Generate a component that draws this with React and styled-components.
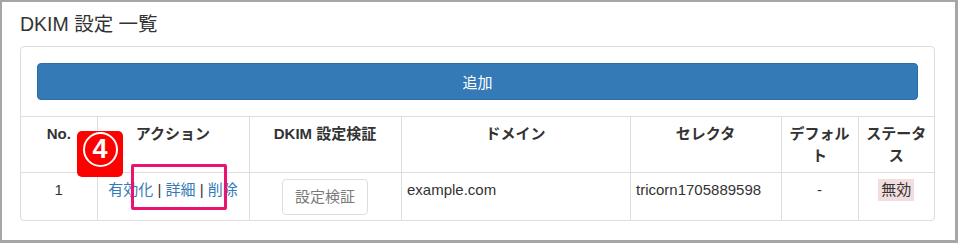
import React from "react";
import styled, { createGlobalStyle } from "styled-components";

const GlobalStyle = createGlobalStyle`
  body {
    margin: 0;
    background: #fff;
    font-family: "Liberation Sans", "Noto Sans CJK JP", sans-serif;
    color: #333;
  }
`;

const columns = [76, 152, 152, 229, 151, 77, 76];

const rows = [
  {
    no: "1",
    domain: "example.com",
    selector: "tricorn1705889598",
    isDefault: "-",
    status: "無効",
  },
];

const App = () => {
  return (
    <>
      <GlobalStyle />
      <Frame>
        <Title>DKIM 設定 一覧</Title>
        <Panel>
          <PanelBody>
            <PrimaryButton type="button">追加</PrimaryButton>
          </PanelBody>
          <Table>
            <colgroup>
              {columns.map((w, i) => (
                <col key={i} style={{ width: w }} />
              ))}
            </colgroup>
            <thead>
              <tr>
                <Th>No.</Th>
                <Th>アクション</Th>
                <Th>DKIM 設定検証</Th>
                <Th>ドメイン</Th>
                <Th>セレクタ</Th>
                <Th>デフォルト</Th>
                <Th>ステータス</Th>
              </tr>
            </thead>
            <tbody>
              {rows.map((row) => (
                <tr key={row.no}>
                  <Td $align="center">{row.no}</Td>
                  <Td $align="center">
                    <Link href="#">有効化</Link> | <Link href="#">詳細</Link> |{" "}
                    <Link href="#">削除</Link>
                  </Td>
                  <Td $align="center">
                    <VerifyButton type="button" disabled>
                      設定検証
                    </VerifyButton>
                  </Td>
                  <Td>{row.domain}</Td>
                  <Td>{row.selector}</Td>
                  <Td $align="center">{row.isDefault}</Td>
                  <Td $align="center">
                    <StatusLabel>{row.status}</StatusLabel>
                  </Td>
                </tr>
              ))}
            </tbody>
          </Table>
        </Panel>

        <StepBadge>
          <StepCircle>4</StepCircle>
        </StepBadge>
        <Highlight />
      </Frame>
    </>
  );
};

export default App;

const Frame = styled.div`
  position: relative;
  box-sizing: border-box;
  width: 958px;
  height: 243px;
  border-style: solid;
  border-color: #a6a6a6;
  border-width: 2px 3px 3px 2px;
  padding: 0 20px 0 18px;
  background: #fff;
  overflow: hidden;
`;

const Title = styled.h4`
  margin: 10px 0 10px;
  font-size: 19.5px;
  line-height: 24px;
  font-weight: normal;
  color: #333;
`;

const Panel = styled.div`
  border: 1px solid #ddd;
  border-radius: 4px;
  background: #fff;
  overflow: hidden;
`;

const PanelBody = styled.div`
  padding: 16px;
`;

const PrimaryButton = styled.button`
  display: block;
  box-sizing: border-box;
  width: 100%;
  height: 37px;
  padding: 0;
  border: 1px solid #2e6da4;
  border-radius: 4px;
  background: #337ab7;
  color: #fff;
  font-family: inherit;
  font-size: 15px;
  cursor: pointer;
`;

const Table = styled.table`
  width: 100%;
  table-layout: fixed;
  border-collapse: collapse;
  font-size: 15px;
  line-height: 22px;

  tr > *:first-child {
    border-left: 0;
  }
  tr > *:last-child {
    border-right: 0;
  }
  tbody tr:last-child td {
    border-bottom: 0;
  }
`;

const Th = styled.th`
  padding: 5.5px;
  border: 1px solid #ddd;
  text-align: center;
  vertical-align: top;
  font-weight: bold;
  color: #333;
`;

const Td = styled.td`
  padding: 5.5px;
  border: 1px solid #ddd;
  text-align: ${(p) => p.$align || "left"};
  vertical-align: top;
  color: #333;
  white-space: nowrap;
`;

const Link = styled.a`
  color: #337ab7;
  text-decoration: none;
`;

const VerifyButton = styled.button`
  box-sizing: border-box;
  height: 36px;
  padding: 6px 12px;
  border: 1px solid #ccc;
  border-radius: 4px;
  background: #fff;
  color: #333;
  opacity: 0.65;
  font-family: inherit;
  font-size: 15px;
  line-height: 22px;
`;

const StatusLabel = styled.span`
  display: inline-block;
  padding: 0 3px;
  background: #f2dede;
  color: #333;
`;

const StepBadge = styled.div`
  position: absolute;
  left: 75px;
  top: 129px;
  width: 46px;
  height: 46px;
  box-sizing: border-box;
  padding-top: 1px;
  border-radius: 5px;
  background: #ff0000;
  display: flex;
  flex-direction: column;
  align-items: center;
`;

const StepCircle = styled.div`
  box-sizing: border-box;
  width: 35px;
  height: 35px;
  border: 2.5px solid #fff;
  border-radius: 50%;
  display: flex;
  align-items: center;
  justify-content: center;
  color: #fff;
  font-family: "Liberation Sans", sans-serif;
  font-weight: bold;
  font-size: 27px;
  line-height: 1;
`;

const Highlight = styled.div`
  position: absolute;
  left: 129px;
  top: 162px;
  width: 96px;
  height: 46px;
  box-sizing: border-box;
  border: 3.5px solid #ea1470;
  border-radius: 2px;
`;
